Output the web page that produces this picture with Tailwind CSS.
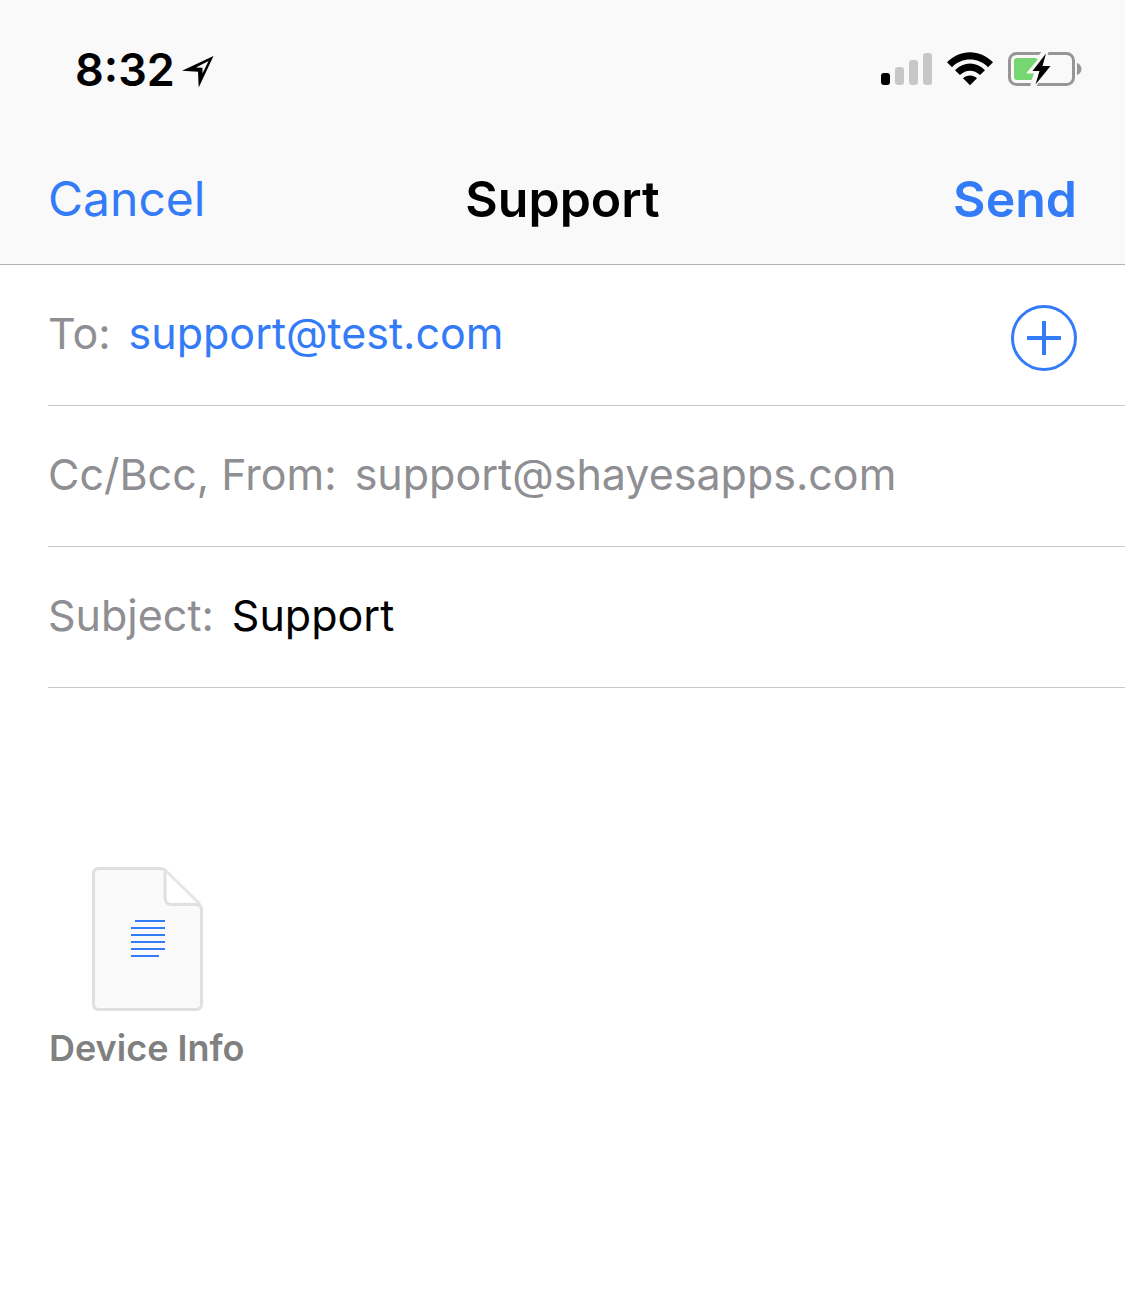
<!DOCTYPE html>
<html lang="en">
<head>
<meta charset="utf-8">
<meta name="viewport" content="width=device-width, initial-scale=1">
<title>Support</title>
<script src="https://cdn.jsdelivr.net/npm/@tailwindcss/browser@4"></script>
</head>
<body class="min-h-screen bg-white font-['Inter',sans-serif] text-black">
<header class="border-b border-[#b2b2b2] bg-[#f9f9f9]">
  <div class="flex h-[138px] items-center justify-between pr-[43px] pl-[75px]">
    <div class="flex items-center gap-[7px] pt-0.5">
      <time class="text-[45px] leading-[54px] font-semibold">8:32</time>
      <svg class="mt-1 h-8 w-8" viewBox="0 0 32 32" aria-hidden="true"><path fill-rule="evenodd" d="M31.5 0L0 14.8L16 15.700L16.7 31.500ZM26.5 5L20.500 17.500V11.700L14 11.500Z"/></svg>
    </div>
    <div class="flex items-center gap-[15px]">
      <svg class="h-[34px] w-[52px]" viewBox="0 0 52 34" role="img" aria-label="Signal strength">
        <rect x="1" y="21" width="9" height="12" rx="3"/>
        <g fill="#c7c7c7"><rect x="15" y="15" width="9" height="18" rx="3"/><rect x="29" y="8" width="9" height="25" rx="3"/><rect x="43" y="1" width="9" height="32" rx="3"/></g>
      </svg>
      <svg class="h-[34px] w-[46px]" viewBox="0 0 46 34" role="img" aria-label="Wi-Fi">
        <path d="M0 10.3C13-3.2 33-3.2 46 10.3L41 15.2C31 5 15 5 5 15.2Z"/>
        <path d="M8 18.2C16.5 9.4 29.5 9.4 38 18.2L33 23C27 17.3 19 17.3 13 23Z"/>
        <path d="M16 26.2C20 22.6 26 22.6 30 26.2L23 33.3Z"/>
      </svg>
      <svg class="h-9 w-[74px]" viewBox="0 0 74 36" role="img" aria-label="Battery charging">
        <rect x="1.5" y="2.5" width="64" height="31" rx="7" fill="none" stroke="#969696" stroke-width="3"/>
        <path d="M69 12C75 14 75 22 69 24Z" fill="#969696"/>
        <path d="M9 7H31L18 22.500H26L23.500 29H9Q6 29 6 26V10Q6 7 9 7Z" fill="#76d672"/>
        <path d="M34 0H41L38 8H28ZM24 28H33L28 36H22Z" fill="#f9f9f9"/>
        <path d="M38 2.5L24.5 20H31.5L27.5 33.5L42.5 15H34.5Z"/>
      </svg>
    </div>
  </div>
  <nav class="grid h-[126px] grid-cols-3 items-start px-12 pt-[31px] text-[50px] leading-[60px]">
    <button type="button" class="justify-self-start text-[48px] text-[#347bf7]">Cancel</button>
    <h1 class="justify-self-center font-semibold">Support</h1>
    <button type="submit" form="message" class="justify-self-end font-semibold text-[#347bf7]">Send</button>
  </nav>
</header>
<main>
  <form id="message" class="pl-12 text-[43px] leading-[54px]">
    <div class="flex h-[141px] items-center gap-[18px] border-b border-[#c8c7cc] pr-12 pb-1">
      <label for="to" class="text-[#8e8e93]">To:</label>
      <input id="to" type="email" value="support@test.com" class="min-w-0 flex-1 text-[#347bf7] outline-none">
      <button type="button" aria-label="Add recipient" class="mt-2.5">
        <svg class="h-[66px] w-[66px]" viewBox="0 0 66 66" fill="none" stroke="#347bf7" aria-hidden="true"><circle cx="33" cy="33" r="31.5" stroke-width="3"/><path d="M33 16V50M16 33H50" stroke-width="4"/></svg>
      </button>
    </div>
    <div class="flex h-[141px] items-center gap-[18px] border-b border-[#c8c7cc] pr-12 pb-1">
      <label for="from" class="text-[#8e8e93]">Cc/Bcc, From:</label>
      <input id="from" type="email" value="support@shayesapps.com" class="min-w-0 flex-1 text-[#8e8e93] outline-none">
    </div>
    <div class="flex h-[141px] items-center gap-[18px] border-b border-[#c8c7cc] pr-12 pb-1">
      <label for="subject" class="text-[#8e8e93]">Subject:</label>
      <input id="subject" type="text" value="Support" class="min-w-0 flex-1 outline-none">
    </div>
  </form>
  <section class="flex px-[49px] pt-[178px] pb-12">
    <figure class="flex flex-col items-center">
      <svg class="h-[146px] w-[114px]" viewBox="0 0 114 146" fill="none" aria-hidden="true">
        <path d="M8 2.5H70Q74 2.5 77 5.500L108 36Q111 39 111 43V138Q111 143.500 106 143.500H8Q3 143.500 3 138V8Q3 2.500 8 2.500Z" fill="#fafafa"/>
        <path d="M75 5V31Q75 38.500 82 38.500H110Z" fill="#fff"/>
        <path d="M75 4L110 38" stroke="#e6e6e6" stroke-width="3"/>
        <path d="M75 6V31Q75 38.500 82 38.500H106Q111.500 38.500 111.500 44V138Q111.500 143.500 106 143.500H9Q3.500 143.500 3.500 138V8Q3.500 2.500 9 2.500H70Q73.500 2.500 76 5" stroke="#e0e0e0" stroke-width="3"/>
        <path d="M45 55H75M41 62H75M41 69H75M41 76H75M41 83H75M41 90H69" stroke="#347bf7" stroke-width="2"/>
      </svg>
      <figcaption class="mt-3 text-[36px] leading-[48px] font-semibold text-[#808080]">Device Info</figcaption>
    </figure>
  </section>
</main>
</body>
</html>
